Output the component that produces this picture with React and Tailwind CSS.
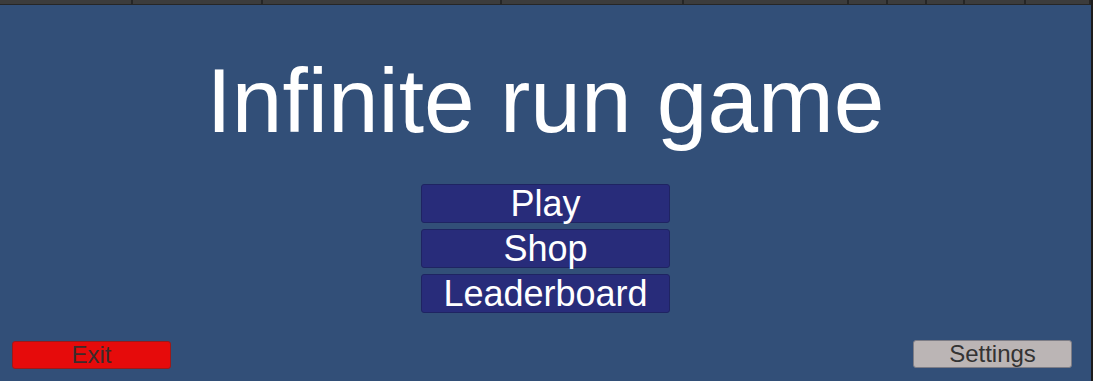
import React from "react";

/* ---- Constants ---- */
const MENU = ["Play", "Shop", "Leaderboard"];
// tab separators along the editor strip on top
const TABS = [133, 130, 239, 182, 165, 39, 39, 38, 61, 65];

const App = () => {
  return (
    <div
      className="relative flex h-[381px] w-[1093px] flex-col overflow-hidden bg-[#324f78]"
      style={{ fontFamily: '"Liberation Sans", Arial, sans-serif' }}
    >
      {/* Top strip */}
      <div className="flex h-[4px] w-full bg-[#3c3c3c]">
        {TABS.map((w, i) => (
          <div
            key={i}
            className="h-full shrink-0 border-r-2 border-[#262626]"
            style={{ width: w }}
          />
        ))}
      </div>
      <div className="h-[1px] w-full bg-[#262626]" />

      {/* Title */}
      <h1 className="mt-[50px] pr-[2px] text-center text-[91px] leading-none text-white">
        Infinite run game
      </h1>

      {/* Menu buttons */}
      <div className="mt-[38px] flex flex-col items-center gap-[6px] pr-[2px]">
        {MENU.map((m) => (
          <button
            key={m}
            className="flex h-[39px] w-[249px] items-center justify-center rounded-[3px] border border-[#1f2462] bg-[#282c7a] text-[36px] leading-none text-white"
          >
            {m}
          </button>
        ))}
      </div>

      {/* Bottom row */}
      <div className="mt-auto flex items-end justify-between pb-[12px] pl-[12px] pr-[21px]">
        <button className="flex h-[28px] w-[159px] items-center justify-center rounded-[3px] border border-[#9b1a1a] bg-[#e60b0b] text-[24px] leading-none text-[#3d2b2b]">
          Exit
        </button>
        <button className="mb-[1px] flex h-[28px] w-[159px] items-center justify-center rounded-[3px] border border-[#7d7d86] bg-[#bbb5b5] text-[24px] leading-none text-[#333]">
          Settings
        </button>
      </div>

      {/* Right frame edge */}
      <div className="absolute right-0 top-0 h-full w-[2px] bg-[#1c1c1c]" />
    </div>
  );
};

export default App;
